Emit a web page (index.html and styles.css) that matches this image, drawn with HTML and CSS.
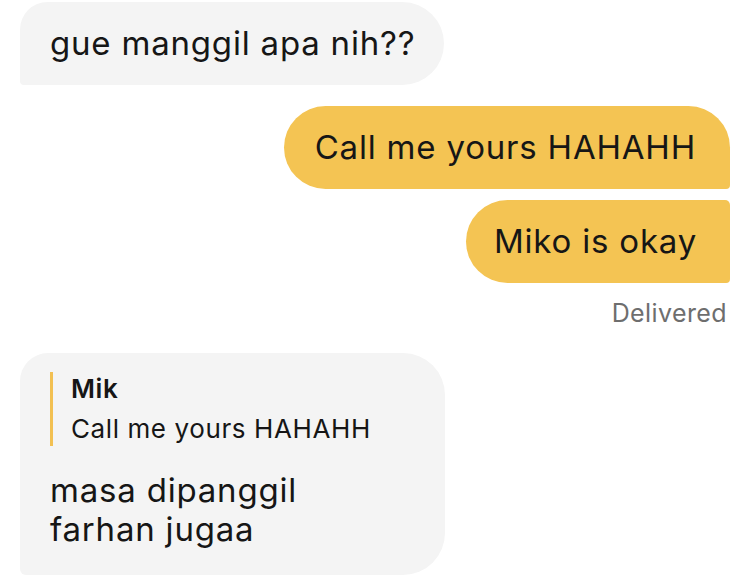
FILE: index.html
```html
<!DOCTYPE html>
<html>
<head>
<meta charset="utf-8">
<link rel="stylesheet" href="styles.css">
</head>
<body>
<div class="chat">
  <div class="bubble in first">gue manggil apa nih??</div>
  <div class="bubble out top">Call me yours HAHAHH</div>
  <div class="bubble out last">Miko is okay</div>
  <div class="status">Delivered</div>
  <div class="bubble in reply">
    <div class="quote">
      <div class="quote-name">Mik</div>
      <div class="quote-text">Call me yours HAHAHH</div>
    </div>
    <div class="reply-text">masa dipanggil<br>farhan jugaa</div>
  </div>
</div>
</body>
</html>
```

FILE: styles.css
```css
html, body {
  margin: 0;
  padding: 0;
  background: #ffffff;
}
.chat {
  width: 750px;
  height: 580px;
  display: flex;
  flex-direction: column;
  font-family: Inter, "Noto Sans", sans-serif;
  color: #161616;
  overflow: hidden;
}
.bubble {
  font-size: 33px;
  line-height: 39px;
  padding: 22px 32px;
  letter-spacing: 0.8px;
}
.in {
  align-self: flex-start;
  margin-left: 20px;
  background: #f4f4f4;
}
.out {
  align-self: flex-end;
  margin-right: 20px;
  background: #f4c453;
}
.first {
  margin-top: 2px;
  padding-left: 30px;
  padding-right: 29px;
  border-radius: 28px 42px 42px 4px;
}
.top {
  margin-top: 21px;
  padding-left: 31px;
  padding-right: 34px;
  border-radius: 42px 42px 4px 42px;
}
.last {
  margin-top: 11px;
  padding-left: 28px;
  padding-right: 33px;
  border-radius: 42px 5px 4px 42px;
}
.status {
  align-self: flex-end;
  margin-right: 23px;
  margin-top: 16px;
  font-size: 25px;
  line-height: 28px;
  color: #6e6e6e;
  letter-spacing: 0.4px;
}
.reply {
  margin-top: 26px;
  width: 355px;
  padding: 19px 40px 26px 30px;
  border-radius: 28px 42px 42px 6px;
}
.quote {
  border-left: 3px solid #f2c052;
  padding-left: 18px;
  font-size: 26px;
  letter-spacing: 0.6px;
}
.quote-name {
  font-weight: 600;
  line-height: 34px;
}
.quote-text {
  margin-top: 6px;
  line-height: 34px;
}
.reply-text {
  margin-top: 25px;
}
```
